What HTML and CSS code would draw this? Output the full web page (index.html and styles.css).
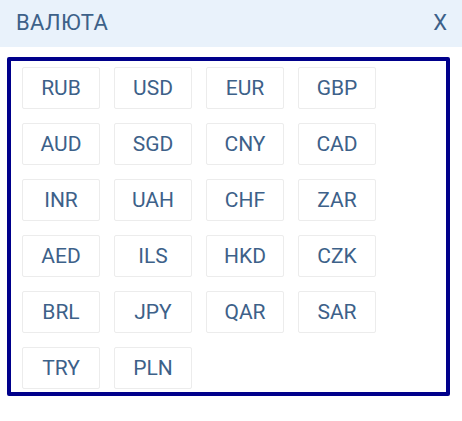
FILE: index.html
```html
<!DOCTYPE html>
<html lang="ru">
<head>
    <meta charset="UTF-8">
    <meta name="viewport" content="width=device-width, initial-scale=1.0">
    <title>Валюта</title>
    <link rel="stylesheet" href="styles.css">
</head>
<body>
    <div class="header">
        <span class="title">ВАЛЮТА</span>
        <span class="close">X</span>
    </div>
    <div class="currencies">
        <button type="button" class="currency">RUB</button>
        <button type="button" class="currency">USD</button>
        <button type="button" class="currency">EUR</button>
        <button type="button" class="currency">GBP</button>
        <button type="button" class="currency">AUD</button>
        <button type="button" class="currency">SGD</button>
        <button type="button" class="currency">CNY</button>
        <button type="button" class="currency">CAD</button>
        <button type="button" class="currency">INR</button>
        <button type="button" class="currency">UAH</button>
        <button type="button" class="currency">CHF</button>
        <button type="button" class="currency">ZAR</button>
        <button type="button" class="currency">AED</button>
        <button type="button" class="currency">ILS</button>
        <button type="button" class="currency">HKD</button>
        <button type="button" class="currency">CZK</button>
        <button type="button" class="currency">BRL</button>
        <button type="button" class="currency">JPY</button>
        <button type="button" class="currency">QAR</button>
        <button type="button" class="currency">SAR</button>
        <button type="button" class="currency">TRY</button>
        <button type="button" class="currency">PLN</button>
    </div>
</body>
</html>
```

FILE: styles.css
```css
body {
    font-family: Roboto, "Liberation Sans", sans-serif;
    background-color: #ffffff;
    margin: 0;
    padding: 0;
    color: #3d6189;
}

.header {
    display: flex;
    justify-content: space-between;
    align-items: center;
    height: 45px;
    padding: 0 15px 2px 16px;
    background-color: #e9f2fb;
    font-size: 22px;
}

.title {
    letter-spacing: 0.4px;
}

.close {
    cursor: pointer;
}

.currencies {
    display: grid;
    grid-template-columns: repeat(4, 78px);
    gap: 14px;
    margin: 10px 0 0 7px;
    padding: 6px 0 3px 11px;
    border: 4px solid #00008b;
    border-radius: 2px;
    box-sizing: border-box;
    width: 443px;
}

.currency {
    height: 42px;
    padding: 0;
    background-color: #ffffff;
    border: 1px solid #ececec;
    border-radius: 2px;
    font-family: inherit;
    font-size: 21px;
    color: #3d6189;
    cursor: pointer;
}
```
